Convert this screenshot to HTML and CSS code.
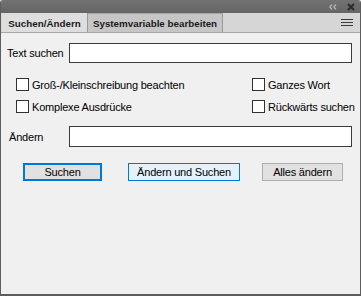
FILE: index.html
```html
<!DOCTYPE html>
<html>
<head>
<meta charset="utf-8">
<link rel="stylesheet" href="styles.css">
</head>
<body>
<div class="panel">
  <div class="titlebar">
    <svg class="collapse" width="8" height="6" viewBox="0 0 8 6"><path d="M3 0.5 L0.8 3 L3 5.5 M7 0.5 L4.8 3 L7 5.5" fill="none" stroke="#b5b5b5" stroke-width="1.2"/></svg>
    <svg class="close" width="8" height="8" viewBox="0 0 8 8"><path d="M1 1 L7 7 M7 1 L1 7" stroke="#2a2a2a" stroke-width="2"/></svg>
  </div>
  <div class="tabs">
    <div class="tab active">Suchen/Ändern</div>
    <div class="tab inactive">Systemvariable bearbeiten</div>
    <div class="tabfill">
      <svg class="menu" width="12" height="8" viewBox="0 0 12 8"><path d="M0 0.5 H12 M0 3.5 H12 M0 6.5 H12" stroke="#3a3a3a" stroke-width="1"/></svg>
    </div>
  </div>
  <div class="content">
    <div class="field-row first">
      <span class="label">Text suchen</span>
      <div class="input"></div>
    </div>
    <div class="options">
      <label class="check"><span class="box"></span>Groß-/Kleinschreibung beachten</label>
      <label class="check"><span class="box"></span>Ganzes Wort</label>
      <label class="check"><span class="box"></span>Komplexe Ausdrücke</label>
      <label class="check"><span class="box"></span>Rückwärts suchen</label>
    </div>
    <div class="field-row second">
      <span class="label alt">Ändern</span>
      <div class="input tall"></div>
    </div>
    <div class="buttons">
      <div class="btn primary">Suchen</div>
      <div class="btn hover">Ändern und Suchen</div>
      <div class="btn plain">Alles ändern</div>
    </div>
  </div>
</div>
</body>
</html>
```
FILE: styles.css
```css
html, body {
  margin: 0;
  padding: 0;
  background: #f0f0f0;
}
.panel {
  width: 361px;
  height: 296px;
  box-sizing: border-box;
  border: 1px solid #5d5d5d;
  border-top: none;
  border-bottom-width: 2px;
  border-radius: 3px 3px 0 0;
  background: #f0f0f0;
  display: flex;
  flex-direction: column;
  font-family: "Liberation Sans", Arial, sans-serif;
  font-size: 11px;
  color: #000;
  overflow: hidden;
}
.titlebar {
  height: 13px;
  background: linear-gradient(#727272, #656565);
  display: flex;
  align-items: center;
  justify-content: flex-end;
  padding-right: 5px;
  gap: 10px;
  flex: none;
}
.tabs {
  height: 19px;
  background: #d6d6d6;
  border-bottom: 1px solid #a8a8a8;
  display: flex;
  flex: none;
  padding-left: 1px;
}
.tab {
  font-family: "Liberation Sans", Arial, sans-serif;
  font-weight: bold;
  font-size: 9.8px;
  color: #1a1a1a;
  display: flex;
  align-items: center;
  justify-content: center;
  white-space: nowrap;
  flex: none;
  box-sizing: border-box;
  padding-top: 1px;
  background: #c6c6c6;
  border-right: 1px solid #9a9a9a;
  border-top: 1px solid #a5a5a5;
}
.tab.active {
  background: #dedede;
  border-top: none;
  width: 86px;
}
.tab.inactive {
  width: 135px;
}
.tabfill {
  flex: 1;
  display: flex;
  align-items: center;
  justify-content: flex-end;
  padding-right: 7px;
}
.content {
  flex: 1;
  padding: 10px 8px 0 6px;
  display: flex;
  flex-direction: column;
}
.field-row {
  display: flex;
  align-items: center;
}
.label {
  width: 62px;
  flex: none;
  letter-spacing: -0.2px;
  white-space: nowrap;
}
.label.alt {
  padding-left: 2px;
  width: 60px;
}
.input {
  flex: 1;
  height: 18px;
  background: #fff;
  border: 1px solid #3c3c3c;
}
.input.tall {
  height: 19px;
}
.options {
  display: grid;
  grid-template-columns: 236px auto;
  row-gap: 9px;
  padding-left: 9px;
  margin-top: 15px;
}
.check {
  display: flex;
  align-items: center;
  height: 13px;
  white-space: nowrap;
  letter-spacing: -0.2px;
}
.box {
  width: 11px;
  height: 11px;
  border: 1px solid #333;
  background: #fff;
  margin-right: 3px;
  flex: none;
}
.field-row.second {
  margin-top: 13px;
}
.buttons {
  display: flex;
  margin-top: 16px;
  padding-left: 16px;
}
.btn {
  height: 18px;
  box-sizing: border-box;
  display: flex;
  align-items: center;
  justify-content: center;
  white-space: nowrap;
  background: #e1e1e1;
  border: 1px solid #adadad;
  letter-spacing: -0.2px;
}
.btn.primary {
  width: 79px;
  border: 2px solid #0078d7;
}
.btn.hover {
  width: 112px;
  margin-left: 26px;
  background: #e5f1fb;
  border-color: #0078d7;
}
.btn.plain {
  width: 81px;
  margin-left: 22px;
}
```
